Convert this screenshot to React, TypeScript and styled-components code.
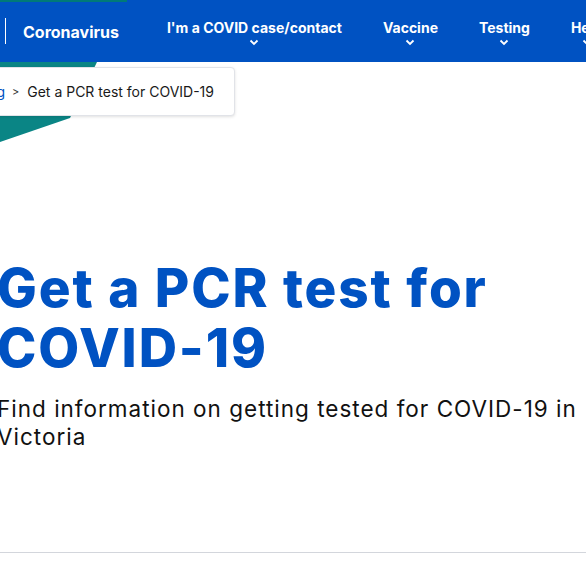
import React from "react";
import styled, { createGlobalStyle } from "styled-components";

const Global = createGlobalStyle`
  html, body { margin: 0; padding: 0; background: #fff; }
  body { font-family: Inter, "Noto Sans", sans-serif; overflow: hidden; }
`;

const Page = styled.div`
  position: relative;
  width: 586px;
  height: 561px;
  overflow: hidden;
  background: #fff;
`;

const TopStrip = styled.div`
  position: absolute;
  left: 0;
  top: 0;
  width: 127px;
  height: 2px;
  background: #007a78;
  z-index: 2;
`;

const Nav = styled.nav`
  height: 62px;
  background: #0052c2;
  display: flex;
  align-items: center;
  padding-left: 5px;
  box-sizing: border-box;
`;

const Divider = styled.span`
  flex-shrink: 0;
  width: 1px;
  height: 26px;
  background: #fff;
  margin-right: 17px;
`;

const Brand = styled.span`
  flex-shrink: 0;
  color: #fff;
  font-weight: 700;
  font-size: 16px;
  margin-right: 48px;
  margin-top: 1px;
`;

const NavList = styled.ul`
  flex-shrink: 0;
  display: flex;
  list-style: none;
  margin: 0;
  padding: 0;
  gap: 41px;
  white-space: nowrap;
`;

const NavItem = styled.li`
  flex-shrink: 0;
  display: flex;
  flex-direction: column;
  align-items: center;
  color: #fff;
  font-weight: 700;
  font-size: 14px;
  margin-top: 2px;
`;

const Chevron = styled.svg`
  width: 10px;
  height: 7px;
  margin-top: 3px;
`;

const Hero = styled.section`
  position: relative;
  height: 490px;
  border-bottom: 1px solid #d3d6dc;
`;

const Shape = styled.svg`
  position: absolute;
  left: 0;
  top: 0;
  width: 100px;
  height: 82px;
`;

const Crumbs = styled.div`
  position: absolute;
  left: -80px;
  top: 5px;
  width: 315px;
  height: 49px;
  background: #fff;
  border: 1px solid #e1e3e8;
  border-radius: 4px;
  box-shadow: 0 1px 3px rgba(0, 0, 0, 0.12);
  display: flex;
  align-items: center;
  justify-content: flex-end;
  padding-right: 20px;
  box-sizing: border-box;
  font-size: 14px;
  color: #1a1a1a;
  white-space: nowrap;
`;

const CrumbLink = styled.span`
  color: #0052c2;
`;

const Sep = styled.span`
  margin: 0 8px 0 7px;
  font-size: 11px;
  color: #333;
`;

const Content = styled.div`
  padding-top: 196px;
  margin-left: -3px;
`;

const Title = styled.h1`
  margin: 0;
  color: #0052c2;
  font-weight: 800;
  font-size: 53px;
  line-height: 60px;
  letter-spacing: 1.9px;
`;

const Lead = styled.p`
  margin: 17px 0 0 0;
  color: #111;
  font-size: 22.5px;
  line-height: 28px;
  letter-spacing: 1px;
  width: 590px;
`;

export default function App() {
  return (
    <Page>
      <Global />
      <TopStrip />
      <Nav>
        <Divider />
        <Brand>Coronavirus</Brand>
        <NavList>
          {["I'm a COVID case/contact", "Vaccine", "Testing", "Help"].map((t) => (
            <NavItem key={t}>
              {t}
              <Chevron viewBox="0 0 10 7">
                <path d="M1.5 1.5 L5 5 L8.5 1.5" fill="none" stroke="#fff" strokeWidth="1.8" />
              </Chevron>
            </NavItem>
          ))}
        </NavList>
      </Nav>
      <Hero>
        <Shape viewBox="0 0 100 82">
          <polygon points="0,0 97,0 70,56 0,80" fill="#0a8585" />
        </Shape>
        <Crumbs>
          <CrumbLink>Testing</CrumbLink>
          <Sep>&gt;</Sep>
          Get a PCR test for COVID-19
        </Crumbs>
        <Content>
          <Title>
            Get a PCR test for
            <br />
            COVID-19
          </Title>
          <Lead>Find information on getting tested for COVID-19 in Victoria</Lead>
        </Content>
      </Hero>
    </Page>
  );
}
